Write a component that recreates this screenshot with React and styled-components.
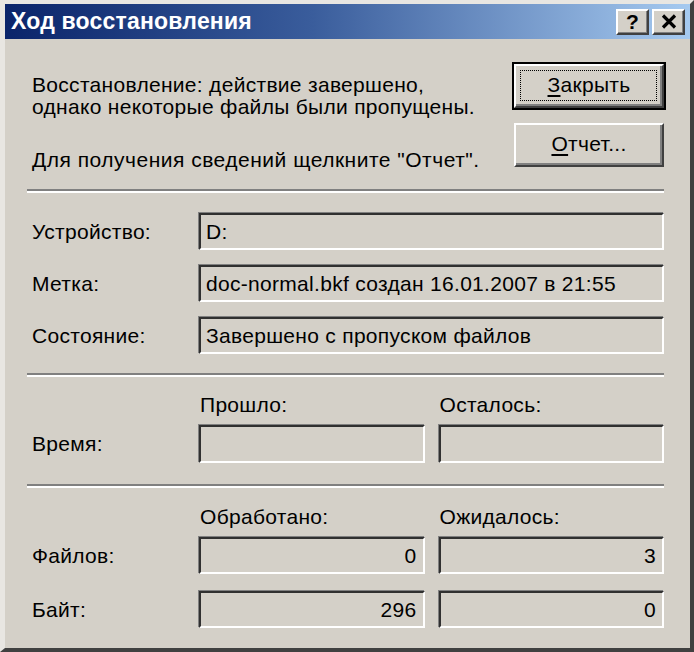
import React from 'react';
import styled, { createGlobalStyle } from 'styled-components';

const GlobalStyle = createGlobalStyle`
    html, body {
        margin: 0;
        padding: 0;
        background: #d4d0c8;
    }
    body {
        font-family: "Liberation Sans", Arial, sans-serif;
        color: #000;
    }
`;

const Window = styled.div`
    box-sizing: border-box;
    width: 694px;
    height: 652px;
    background: #d4d0c8;
    border-style: solid;
    border-width: 4px 4px 4px 5px;
    border-color: #e8e6e2 #404040 #404040 #e8e6e2;
    display: flex;
    flex-direction: column;
    overflow: hidden;
`;

const TitleBar = styled.div`
    height: 35px;
    flex-shrink: 0;
    display: flex;
    align-items: center;
    padding: 0 5px 0 6px;
    background: linear-gradient(to right, #0a246a 0%, #3a5d9c 45%, #a6caf0 100%);
`;

const Title = styled.div`
    flex: 1;
    color: #fff;
    font-family: "Liberation Sans", Arial, sans-serif;
    font-weight: 700;
    font-size: 23px;
    letter-spacing: 0.2px;
`;

const CaptionButton = styled.div`
    box-sizing: border-box;
    width: 33px;
    height: 26px;
    margin-left: 3px;
    background: #d4d0c8;
    border: 2px solid;
    border-color: #fff #404040 #404040 #fff;
    box-shadow: inset -1px -1px 0 #808080;
    display: flex;
    align-items: center;
    justify-content: center;
    font-family: "Liberation Sans", Arial, sans-serif;
    font-weight: 700;
    font-size: 21px;
    line-height: 1;
`;

const Body = styled.div`
    flex: 1;
    padding: 25px 26px 0 22px;
    font-size: 21px;
    letter-spacing: 0.3px;
`;

const TopSection = styled.div`
    display: flex;
    justify-content: space-between;
`;

const Message = styled.div`
    padding: 10px 0 0 5px;
    line-height: 22px;
`;

const Hint = styled.p`
    margin: 31px 0 0;
    letter-spacing: 0.5px;
`;

const ButtonColumn = styled.div`
    display: flex;
    flex-direction: column;
    gap: 15px;
    width: 150px;
`;

const Button = styled.div`
    position: relative;
    box-sizing: border-box;
    height: 44px;
    display: flex;
    align-items: center;
    justify-content: center;
    border: 2px solid;
    border-color: #fff #404040 #404040 #fff;
    box-shadow: inset -2px -2px 0 #808080;
    outline: ${p => (p.$default ? '2px solid #000' : 'none')};
    font-size: 21px;
    letter-spacing: 0.3px;
    padding-bottom: 2px;
    & u {
        text-underline-offset: 3px;
    }
`;

const FocusRect = styled.span`
    position: absolute;
    inset: 4px 5px 5px 4px;
    border: 1px dotted #000;
    pointer-events: none;
`;

const Separator = styled.div`
    height: 0;
    border-top: 2px solid #808080;
    border-bottom: 2px solid #fff;
    margin: ${p => p.$margin};
`;

const FieldGrid = styled.div`
    display: grid;
    grid-template-columns: 158px 1fr 1fr;
    column-gap: 14px;
    row-gap: ${p => p.$rowGap || '15px'};
    align-items: center;
    margin-bottom: ${p => p.$below || '0'};
`;

const Label = styled.div`
    padding-left: 5px;
    grid-column: 1;
`;

const ColumnHead = styled.div`
    padding-left: 1px;
    height: 20px;
    line-height: 20px;
`;

const Field = styled.div`
    box-sizing: border-box;
    height: ${p => p.$height || '37px'};
    grid-column: ${p => p.$span || 'auto'};
    border: 2px solid;
    border-color: #303030 #fff #fff #303030;
    box-shadow: -1px -1px 0 #808080;
    display: flex;
    align-items: center;
    justify-content: ${p => (p.$right ? 'flex-end' : 'flex-start')};
    padding: 0 6px 0 5px;
    white-space: nowrap;
`;

const CloseIcon = () => (
    <svg width="16" height="15" viewBox="0 0 16 15">
        <path d="M2 1.5 L14 13.5 M14 1.5 L2 13.5" stroke="#000" strokeWidth="3.2" />
    </svg>
);

const fields = [
    { label: 'Устройство:', value: 'D:' },
    { label: 'Метка:', value: 'doc-normal.bkf создан 16.01.2007 в 21:55' },
    { label: 'Состояние:', value: 'Завершено с пропуском файлов' },
];

const counters = [
    { label: 'Файлов:', done: '0', expected: '3' },
    { label: 'Байт:', done: '296', expected: '0' },
];

export default function App() {
    return (
        <>
            <GlobalStyle />
            <Window>
                <TitleBar>
                    <Title>Ход восстановления</Title>
                    <CaptionButton>?</CaptionButton>
                    <CaptionButton>
                        <CloseIcon />
                    </CaptionButton>
                </TitleBar>
                <Body>
                    <TopSection>
                        <Message>
                            Восстановление: действие завершено,
                            <br />
                            однако некоторые файлы были пропущены.
                            <Hint>Для получения сведений щелкните "Отчет".</Hint>
                        </Message>
                        <ButtonColumn>
                            <Button $default>
                                <FocusRect />
                                <span><u>З</u>акрыть</span>
                            </Button>
                            <Button>
                                <span><u>О</u>тчет...</span>
                            </Button>
                        </ButtonColumn>
                    </TopSection>

                    <Separator $margin="18px 0 20px" />

                    <FieldGrid>
                        {fields.map(f => (
                            <React.Fragment key={f.label}>
                                <Label>{f.label}</Label>
                                <Field $span="2 / 4">{f.value}</Field>
                            </React.Fragment>
                        ))}
                    </FieldGrid>

                    <Separator $margin="19px 0 18px" />

                    <FieldGrid $below="10px">
                        <div />
                        <ColumnHead>Прошло:</ColumnHead>
                        <ColumnHead>Осталось:</ColumnHead>
                    </FieldGrid>
                    <FieldGrid>
                        <Label>Время:</Label>
                        <Field $height="38px" />
                        <Field $height="38px" />
                    </FieldGrid>

                    <Separator $margin="21px 0 19px" />

                    <FieldGrid $below="10px">
                        <div />
                        <ColumnHead>Обработано:</ColumnHead>
                        <ColumnHead>Ожидалось:</ColumnHead>
                    </FieldGrid>
                    <FieldGrid $rowGap="17px">
                        {counters.map(c => (
                            <React.Fragment key={c.label}>
                                <Label>{c.label}</Label>
                                <Field $right>{c.done}</Field>
                                <Field $right>{c.expected}</Field>
                            </React.Fragment>
                        ))}
                    </FieldGrid>
                </Body>
            </Window>
        </>
    );
}
